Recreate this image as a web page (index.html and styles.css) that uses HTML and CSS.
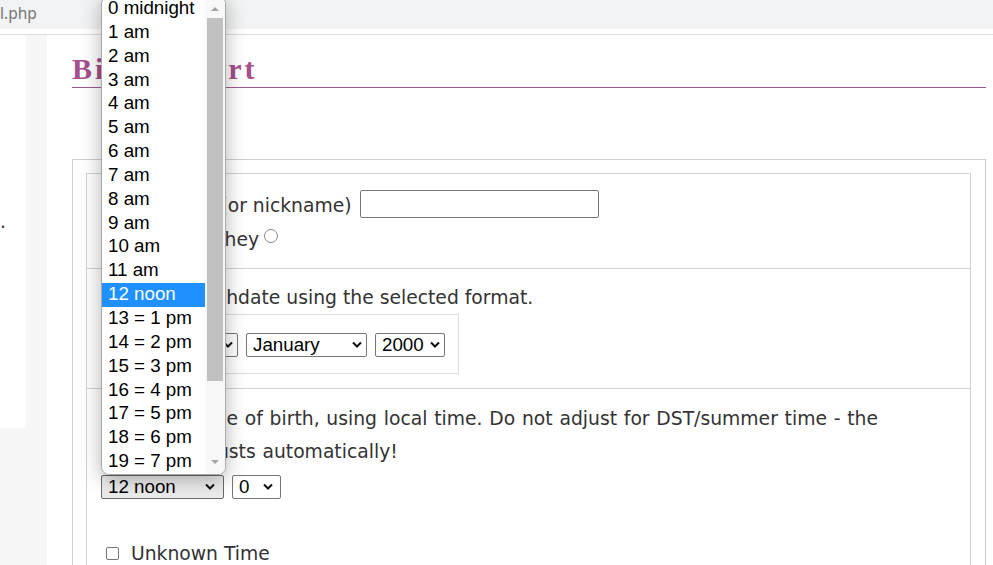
FILE: index.html
```html
<!DOCTYPE html>
<html lang="en">
<head>
<meta charset="utf-8">
<title>Birth Chart</title>
<link rel="stylesheet" href="styles.css">
</head>
<body>
<div class="toolbar">
  <div class="omnibox"><span class="url">l.php</span></div>
</div>
<div class="page">
  <aside class="sidebar">
    <div class="side-box"><p class="side-text">.</p></div>
  </aside>
  <main class="main">
    <h1 class="title">Birth Chart</h1>
    <form class="outer">
      <div class="table">
        <div class="row row-name">
          <div class="line">Client name (or nickname) <input class="text-input" type="text"></div>
          <div class="line line-second">He<input class="radio" type="radio" name="g"> She<input class="radio" type="radio" name="g"> They<input class="radio" type="radio" name="g"></div>
        </div>
        <div class="row row-date">
          <div class="line">Enter the birthdate using the selected format.</div>
          <div class="date-box">
            <span class="sel"><select class="select w-day"><option>1</option><option>2</option><option>3</option></select><svg class="chev chev-near" viewBox="0 0 10 7"><polyline points="1,1.5 5,5.5 9,1.5"/></svg></span>
            <span class="sel"><select class="select w-month"><option selected>January</option><option>February</option><option>March</option><option>April</option><option>May</option><option>June</option><option>July</option><option>August</option><option>September</option><option>October</option><option>November</option><option>December</option></select><svg class="chev chev-near" viewBox="0 0 10 7"><polyline points="1,1.5 5,5.5 9,1.5"/></svg></span>
            <span class="sel"><select class="select w-year"><option>1999</option><option selected>2000</option><option>2001</option></select><svg class="chev chev-near" viewBox="0 0 10 7"><polyline points="1,1.5 5,5.5 9,1.5"/></svg></span>
          </div>
        </div>
        <div class="row row-time">
          <div class="line time-note">Enter the time of birth, using local time. Do not adjust for DST/summer time - the software adjusts automatically!</div>
          <div class="time-selects">
            <span class="sel"><select class="select select-active w-hour"><option>0 midnight</option><option>1 am</option><option>2 am</option><option>3 am</option><option>4 am</option><option>5 am</option><option>6 am</option><option>7 am</option><option>8 am</option><option>9 am</option><option>10 am</option><option>11 am</option><option selected>12 noon</option><option>13 = 1 pm</option><option>14 = 2 pm</option><option>15 = 3 pm</option><option>16 = 4 pm</option><option>17 = 5 pm</option><option>18 = 6 pm</option><option>19 = 7 pm</option><option>20 = 8 pm</option><option>21 = 9 pm</option><option>22 = 10 pm</option><option>23 = 11 pm</option></select><svg class="chev chev-far" viewBox="0 0 10 7"><polyline points="1,1.5 5,5.5 9,1.5"/></svg></span>
            <span class="sel"><select class="select w-min"><option selected>0</option><option>1</option><option>2</option><option>3</option><option>4</option><option>5</option><option>10</option><option>15</option><option>20</option><option>30</option><option>45</option></select><svg class="chev chev-mid" viewBox="0 0 10 7"><polyline points="1,1.5 5,5.5 9,1.5"/></svg></span>
          </div>
          <label class="unknown"><input class="check" type="checkbox"> Unknown Time</label>
        </div>
      </div>
    </form>
  </main>
</div>

<div class="popup" role="listbox">
  <ul class="options">
    <li>0 midnight</li>
    <li>1 am</li>
    <li>2 am</li>
    <li>3 am</li>
    <li>4 am</li>
    <li>5 am</li>
    <li>6 am</li>
    <li>7 am</li>
    <li>8 am</li>
    <li>9 am</li>
    <li>10 am</li>
    <li>11 am</li>
    <li class="selected">12 noon</li>
    <li>13 = 1 pm</li>
    <li>14 = 2 pm</li>
    <li>15 = 3 pm</li>
    <li>16 = 4 pm</li>
    <li>17 = 5 pm</li>
    <li>18 = 6 pm</li>
    <li>19 = 7 pm</li>
    <li>20 = 8 pm</li>
    <li>21 = 9 pm</li>
    <li>22 = 10 pm</li>
    <li>23 = 11 pm</li>
  </ul>
  <div class="scrollbar">
    <span class="arrow-up"></span>
    <span class="thumb"></span>
    <span class="arrow-down"></span>
  </div>
</div>
</body>
</html>
```

FILE: styles.css
```css
html, body {
  margin: 0;
  padding: 0;
  overflow: hidden;
  background: #fff;
}

body {
  position: relative;
  width: 993px;
  height: 565px;
  font-family: "DejaVu Sans", Verdana, sans-serif;
  font-size: 18.75px;
  color: #333;
}

/* browser toolbar fragment */
.toolbar {
  height: 34px;
  border-bottom: 1px solid #dadce0;
  background: #fff;
}

.omnibox {
  height: 29px;
  box-sizing: border-box;
  padding-top: 2.5px;
  background: #f1f3f4;
}

.url {
  display: block;
  font-family: "Noto Sans", sans-serif;
  font-size: 15.5px;
  line-height: 20px;
  color: #767676;
}

/* page */
.page {
  display: flex;
  height: 530px;
}

.sidebar {
  flex: none;
  width: 47px;
  background: #f7f7f7;
}

.side-box {
  width: 26px;
  height: 393px;
  background: #fff;
  overflow: hidden;
}

.side-text {
  margin: 0;
  padding-top: 170px;
  line-height: 33px;
}

.main {
  flex: 1;
  padding: 0 7px 0 25px;
}

.title {
  margin: 17px 0 0;
  padding-bottom: 1px;
  border-bottom: 1px solid #a0598f;
  font-family: "Liberation Serif", "Times New Roman", serif;
  font-size: 30px;
  font-weight: bold;
  line-height: normal;
  letter-spacing: 3px;
  color: #a5508b;
}

.outer {
  margin: 71px 0 0;
  border: 1px solid #cfcfcf;
  padding: 13px 14px 13px 13px;
}

.table {
  border: 1px solid #d3d3d3;
}

.row {
  padding: 0 12.5px 0 14px;
}

.row + .row {
  border-top: 1px solid #d3d3d3;
}

.line {
  line-height: 33px;
}

.row-name {
  padding-top: 14.5px;
  padding-bottom: 10px;
}

.line-second {
  line-height: 36px;
}

.text-input {
  -webkit-appearance: none;
  appearance: none;
  box-sizing: border-box;
  width: 239px;
  height: 28px;
  margin: 0 0 0 2px;
  padding: 0 3px;
  border: 1px solid #767676;
  border-radius: 2px;
  background: #fff;
  font-family: "Liberation Sans", Arial, sans-serif;
  font-size: 18.75px;
  vertical-align: 1.5px;
}

.radio {
  -webkit-appearance: none;
  appearance: none;
  box-sizing: border-box;
  width: 14px;
  height: 14px;
  margin: 0 1px 0 4.6px;
  border: 1px solid #8a8a8a;
  border-radius: 50%;
  background: #fff;
  vertical-align: 3px;
}

.row-date {
  padding-top: 12px;
  padding-bottom: 14.5px;
}

.date-box {
  display: flex;
  gap: 8px;
  width: max-content;
  border: 1px solid #dcdcdc;
  padding: 18px 13px 16px;
}

.row-time {
  padding-top: 13px;
  padding-bottom: 20px;
}

.time-note {
  word-spacing: 0.8px;
}

.time-selects {
  display: flex;
  gap: 8px;
  margin-top: 7px;
}

.unknown {
  display: block;
  margin-top: 38px;
  line-height: 33px;
}

.check {
  -webkit-appearance: none;
  appearance: none;
  box-sizing: border-box;
  width: 13px;
  height: 13px;
  margin: 0 6px 0 5px;
  border: 1px solid #767676;
  border-radius: 2px;
  background: #fff;
}

/* selects */
.sel {
  position: relative;
  display: block;
  flex: none;
}

.select {
  -webkit-appearance: none;
  appearance: none;
  display: block;
  box-sizing: border-box;
  height: 24px;
  margin: 0;
  padding: 0 20px 0 6px;
  border: 1px solid #767676;
  border-radius: 2px;
  background: #fff;
  font-family: "Liberation Sans", Arial, sans-serif;
  font-size: 18.75px;
  line-height: 22px;
  color: #000;
}

.select-active {
  background: #ececec;
  border-color: #6a6a6a;
}

.w-day { width: 123px; }
.w-month { width: 121px; }
.w-year { width: 70px; }
.w-hour { width: 123px; }
.w-min { width: 49px; }

.chev {
  position: absolute;
  top: 8px;
  width: 10px;
  height: 7px;
  fill: none;
  stroke: #111;
  stroke-width: 2;
  pointer-events: none;
}

.chev-near { right: 5.5px; }
.chev-mid { right: 8.5px; }
.chev-far { right: 9.3px; }

/* open dropdown list */
.popup {
  position: absolute;
  left: 101px;
  top: -4px;
  box-sizing: border-box;
  width: 125px;
  height: 479px;
  display: flex;
  border: 1px solid #a9a9a9;
  border-radius: 8px;
  background: #fff;
  overflow: hidden;
  box-shadow: 0 4px 20px rgba(0, 0, 0, 0.3);
  font-family: "Liberation Sans", Arial, sans-serif;
  font-size: 18.75px;
  color: #000;
}

.options {
  flex: none;
  width: 103px;
  margin: 0;
  padding: 0;
  list-style: none;
  overflow: hidden;
}

.options li {
  height: 23.85px;
  padding-left: 6px;
  line-height: 21px;
  white-space: nowrap;
}

.options li.selected {
  background: #1e90ff;
  color: #fff;
}

.scrollbar {
  flex: 1;
  display: flex;
  flex-direction: column;
  align-items: center;
  background: #f8f8f8;
}

.arrow-up {
  width: 0;
  height: 0;
  margin-top: 9.7px;
  border-left: 4.5px solid transparent;
  border-right: 4.5px solid transparent;
  border-bottom: 4.5px solid #a3a3a3;
}

.thumb {
  width: 16px;
  height: 363px;
  margin-top: 7px;
  background: #c1c1c1;
}

.arrow-down {
  width: 0;
  height: 0;
  margin-top: auto;
  margin-bottom: 10px;
  border-left: 4.5px solid transparent;
  border-right: 4.5px solid transparent;
  border-top: 4.5px solid #a3a3a3;
}
```
